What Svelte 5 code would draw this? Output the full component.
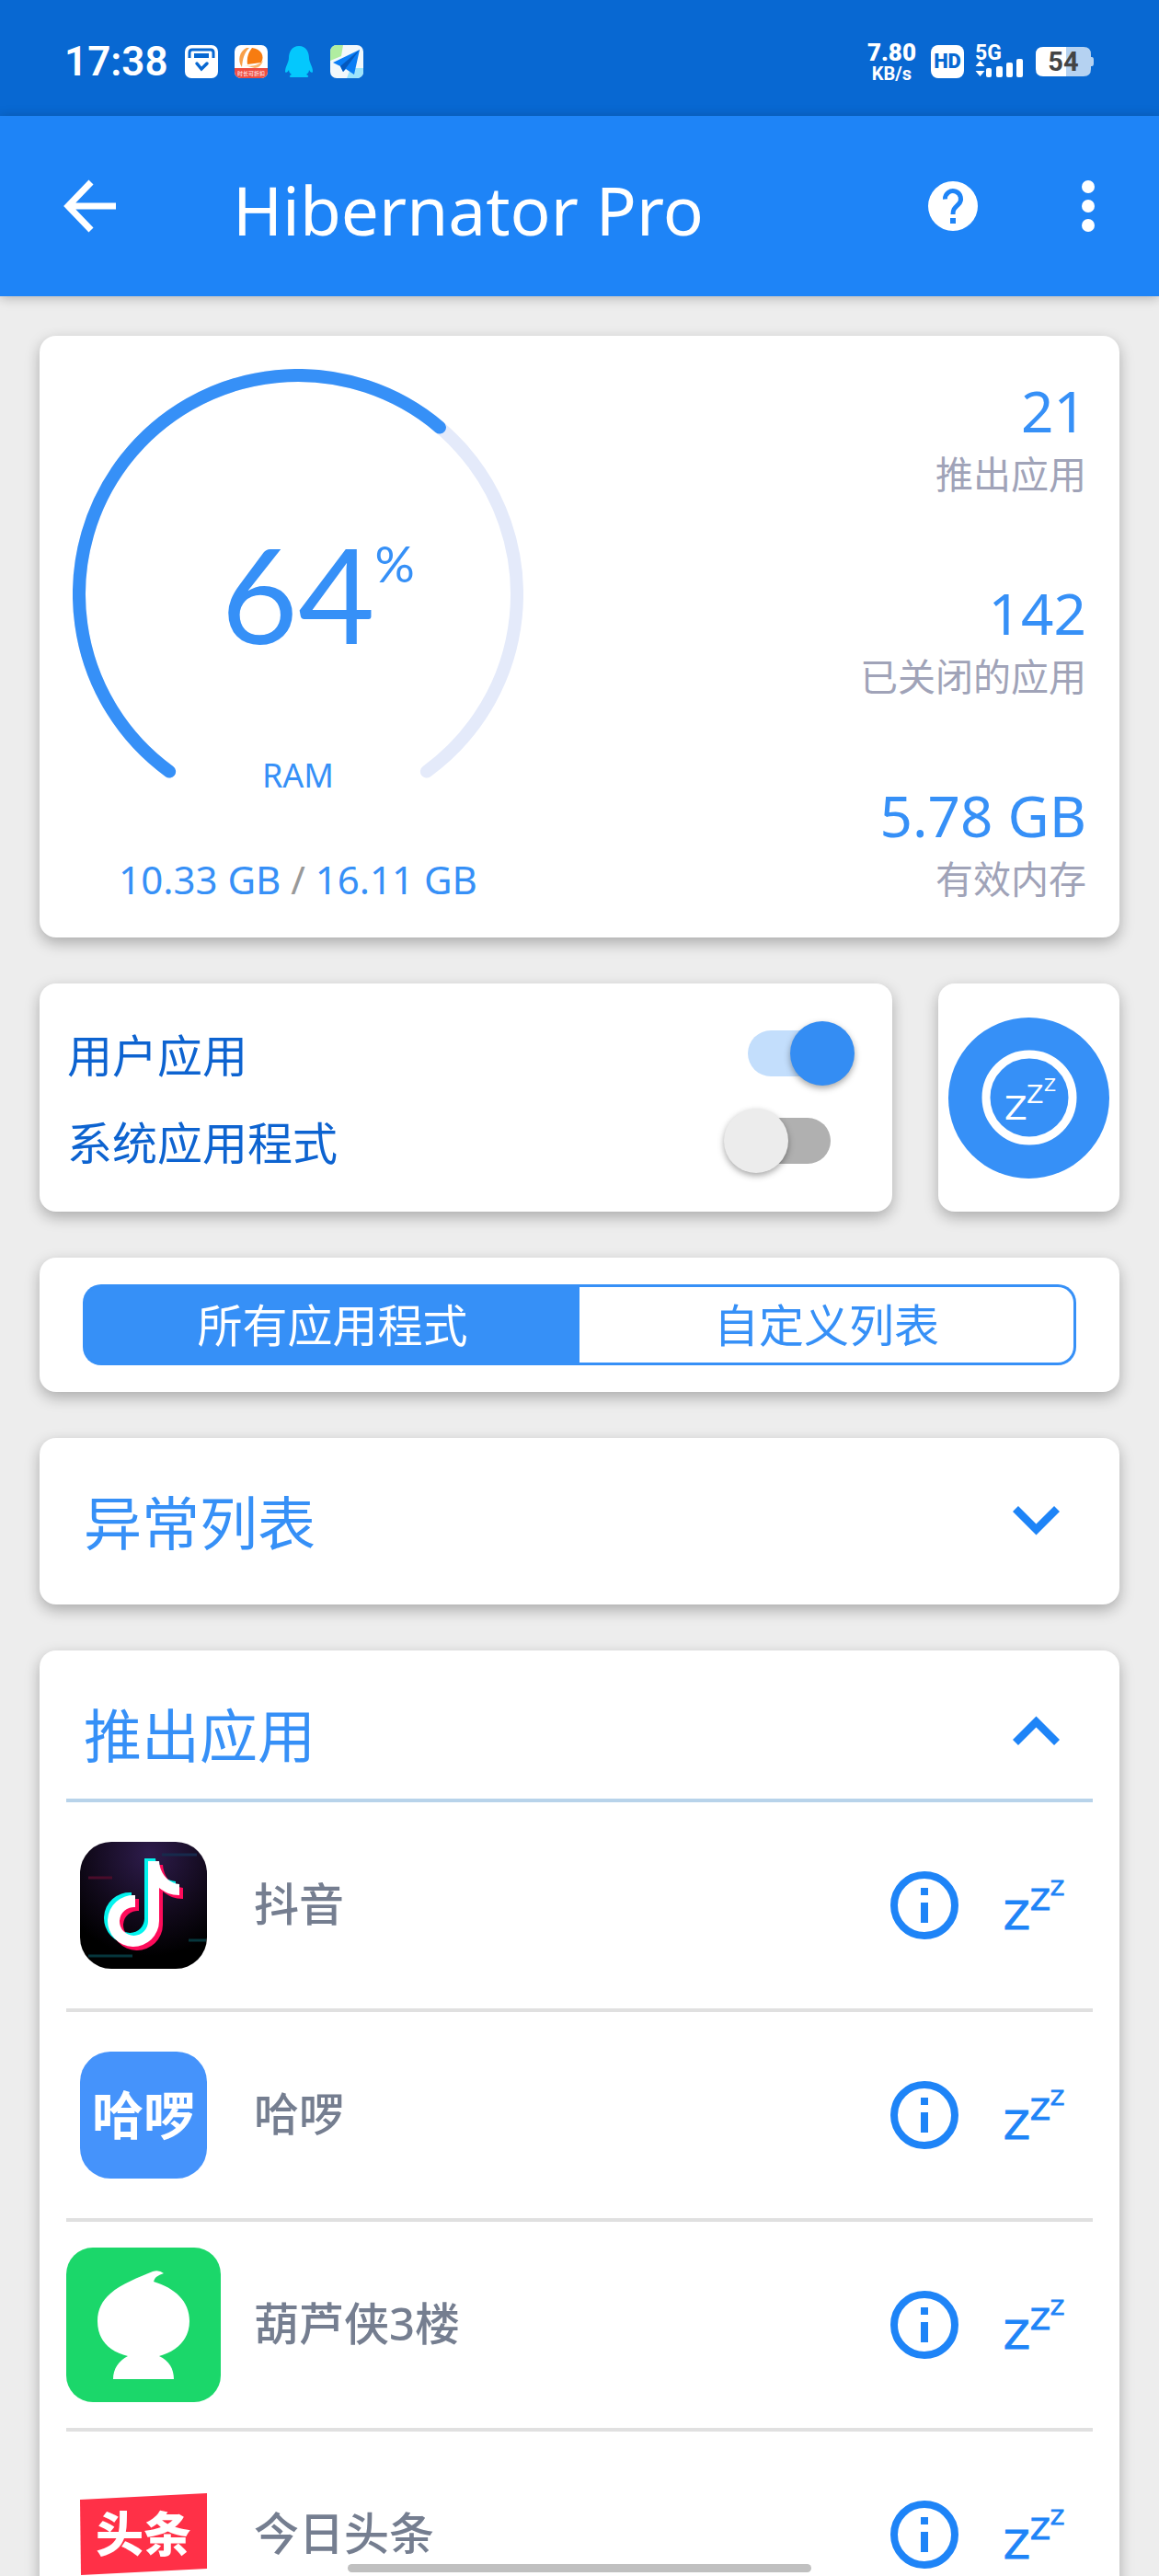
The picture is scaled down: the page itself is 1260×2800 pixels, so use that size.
<script lang="ts">
	type App = { name: string; icon: string };

	const stats = [
		{ value: '21', label: '推出应用' },
		{ value: '142', label: '已关闭的应用' },
		{ value: '5.78 GB', label: '有效内存' }
	];
	const apps: App[] = [
		{ name: '抖音', icon: 'douyin' },
		{ name: '哈啰', icon: 'hello' },
		{ name: '葫芦侠3楼', icon: 'gourd' },
		{ name: '今日头条', icon: 'toutiao' }
	];

	const RADIUS = 238;
	const START = 126;
	const SWEEP = 288;

	let percent = $state(64);
	let userApps = $state(true);
	let systemApps = $state(false);
	let tab = $state('all');
	let exceptionsOpen = $state(false);
	let closingOpen = $state(true);

	function point(deg: number) {
		const a = (deg * Math.PI) / 180;
		return `${245 + RADIUS * Math.cos(a)} ${245 + RADIUS * Math.sin(a)}`;
	}
	function arc(sweep: number) {
		return `M${point(START)} A${RADIUS} ${RADIUS} 0 ${sweep > 180 ? 1 : 0} 1 ${point(START + sweep)}`;
	}
</script>

{#snippet chevron(open: boolean)}
	<svg class="chevron" viewBox="6 6 12 12" aria-hidden="true">
		{#if open}
			<path d="M12 8l-6 6 1.41 1.41L12 10.83l4.59 4.58L18 14z" />
		{:else}
			<path d="M16.59 8.59L12 13.17 7.41 8.59 6 10l6 6 6-6z" />
		{/if}
	</svg>
{/snippet}

<div class="screen">
	<div class="status">
		<span class="clock">17:38</span>
		<svg width="36" height="36" viewBox="0 0 36 36">
			<rect width="36" height="36" rx="7" fill="#fff" />
			<path d="M5 14V8q0-3 3-3h20q3 0 3 3v6" fill="none" stroke="#0868d2" stroke-width="3" />
			<rect x="10" y="9" width="16" height="5" fill="#0868d2" />
			<path d="M13 20l5 6 6-6" fill="none" stroke="#0868d2" stroke-width="3.5" stroke-linecap="round" />
		</svg>
		<svg width="36" height="36" viewBox="0 0 36 36">
			<clipPath id="round"><rect width="36" height="36" rx="7" /></clipPath>
			<g clip-path="url(#round)">
				<rect width="36" height="36" fill="#fff" />
				<path d="M13 3C5 7 3 17 8 24C9 15 10 9 16 3z" fill="#f8a04a" />
				<path d="M19 3C29 4 33 12 29 19L14 21C13 14 15 8 19 3z" fill="#f77c10" />
				<path d="M11 22C20 24 27 21 31 17Q29 24 22 25z" fill="#fbb66c" />
				<rect y="25" width="36" height="11" fill="#ee4d42" />
				<text x="18" y="33" class="tiny">时长可折扣</text>
			</g>
		</svg>
		<svg width="32" height="36" viewBox="0 0 32 36">
			<path
				d="M16 1C8 1 5 8 5 14C5 19 1 23 1 29C2 31 4 29 5 27C5 30 7 31 8 32C5 33 5 35 8 35H24C27 35 27 33 24 32C25 31 27 30 27 27C28 29 30 31 31 29C31 23 27 19 27 14C27 8 24 1 16 1z"
				fill="#04c8fd"
			/>
		</svg>
		<svg width="36" height="36" viewBox="0 0 36 36">
			<g clip-path="url(#round)">
				<rect width="36" height="36" fill="#f2f8fb" />
				<path d="M0 0H14L12 12L0 17z" fill="#b0eda0" />
				<path d="M22 25H36V36H18z" fill="#9ee4fb" />
				<path d="M32 5L3 19L11 23L14 29L17 26L26 32z" fill="#0a7df5" />
				<path d="M32 5L11 23L14 29L17 25z" fill="#0558bd" />
			</g>
		</svg>
		<div class="network">
			<span class="speed"><b>7.80</b><span>KB/s</span></span>
			<span class="hd">HD</span>
			<svg width="54" height="56" viewBox="0 -9 54 56">
				<text x="0" y="17" class="net">5G</text>
				<path d="M5.500 18l5 6h-10zM0.500 29h10l-5 6z" fill="#fff" />
				<g fill="#fff">
					<rect x="12" y="26" width="6" height="10" rx="2" />
					<rect x="23" y="24" width="7" height="12" rx="2" />
					<rect x="34" y="20" width="7" height="16" rx="2" />
					<rect x="45" y="16" width="7" height="20" rx="2" />
				</g>
			</svg>
			<svg width="64" height="46" viewBox="0 -6 64 46">
				<path d="M33 1H52Q60 1 60 9V12H61Q63 12 63 15V19Q63 22 61 22H60V25Q60 33 52 33H33z" fill="#b5d2f1" />
				<path d="M8 1H33V33H8Q0 33 0 25V9Q0 1 8 1z" fill="#fff" />
				<text x="30" y="27" class="battery">54</text>
			</svg>
		</div>
	</div>

	<header class="bar">
		<button class="back" aria-label="返回">
			<svg width="58" height="58" viewBox="0 0 58 58">
				<path d="M57 29H5M30 3L5 29L30 55" fill="none" stroke="#fff" stroke-width="7" />
			</svg>
		</button>
		<h1>Hibernator Pro</h1>
		<button aria-label="帮助">
			<svg width="54" height="54" viewBox="0 0 54 54">
				<circle cx="27" cy="27" r="27" fill="#fff" />
				<path
					d="M18.500 19.500A8.500 8.500 0 1 1 33 25C29 29 27 30 27 36"
					fill="none"
					stroke="#1e84f7"
					stroke-width="5"
				/>
				<rect x="24" y="40" width="6" height="6" fill="#1e84f7" />
			</svg>
		</button>
		<button aria-label="更多">
			<svg width="16" height="58" viewBox="0 0 16 58" fill="#fff">
				<circle cx="8" cy="8" r="7" />
				<circle cx="8" cy="29" r="7" />
				<circle cx="8" cy="50" r="7" />
			</svg>
		</button>
	</header>

	<main>
		<section class="card summary">
			<div class="memory">
				<div class="gauge">
					<svg width="490" height="450" viewBox="0 0 490 450" fill="none" stroke-width="14" stroke-linecap="round">
						<path d={arc(SWEEP)} stroke="#e4eafa" />
						<path d={arc((SWEEP * percent) / 100)} stroke="#3690f7" />
					</svg>
					<p class="percent">{percent}<sup>%</sup></p>
					<p class="ram">RAM</p>
				</div>
				<p class="usage">10.33 GB <i>/</i> 16.11 GB</p>
			</div>
			<dl>
				{#each stats as s}
					<div>
						<dd>{s.value}</dd>
						<dt>{s.label}</dt>
					</div>
				{/each}
			</dl>
		</section>

		<div class="controls">
			<section class="card toggles">
				<label>用户应用 <input type="checkbox" role="switch" bind:checked={userApps} /></label>
				<label>系统应用程式 <input type="checkbox" role="switch" bind:checked={systemApps} /></label>
			</section>
			<section class="card sleep">
				<button aria-label="休眠">
					<svg width="104" height="104" viewBox="0 0 104 104">
						<circle cx="52" cy="52" r="47" fill="none" stroke="#fff" stroke-width="9" />
						<g class="zs" fill="#fff">
							<text x="25" y="76" font-size="36">Z</text>
							<text x="49" y="58" font-size="27">Z</text>
							<text x="68" y="45" font-size="19">Z</text>
						</g>
					</svg>
				</button>
			</section>
		</div>

		<section class="card tabs">
			<button class:active={tab === 'all'} onclick={() => (tab = 'all')}>所有应用程式</button>
			<button class:active={tab === 'custom'} onclick={() => (tab = 'custom')}>自定义列表</button>
		</section>

		<section class="card list">
			<button class="head" aria-expanded={exceptionsOpen} onclick={() => (exceptionsOpen = !exceptionsOpen)}>
				异常列表 {@render chevron(exceptionsOpen)}
			</button>
		</section>

		<section class="card list">
			<button class="head" aria-expanded={closingOpen} onclick={() => (closingOpen = !closingOpen)}>
				推出应用 {@render chevron(closingOpen)}
			</button>
			{#if closingOpen}
				<ul>
					{#each apps as app}
						<li>
							<svg class="icon" viewBox="0 0 168 168" aria-hidden="true">
								{#if app.icon === 'douyin'}
									<defs>
										<radialGradient id="night" cx="0.55" cy="0.1" r="0.8">
											<stop offset="0" stop-color="#2e1c4c" />
											<stop offset="0.6" stop-color="#120a1c" />
											<stop offset="1" stop-color="#000" />
										</radialGradient>
										<path
											id="note"
											d="M89 36H101C102 50 111 60 123 61V73C114 73 107 70 101 65V101A28 28 0 1 1 75 73V86A15.500 15.500 0 1 0 89 101z"
										/>
									</defs>
									<rect x="15" y="15" width="138" height="138" rx="34" fill="url(#night)" />
									<path d="M24 54H50" stroke="#4a0c2a" stroke-width="3" />
									<path d="M104 29H142" stroke="#172a4c" stroke-width="3" />
									<path d="M133 122H152M24 139H72" stroke="#06363c" stroke-width="3" />
									<use href="#note" x="-4" y="-3" fill="#04f4ee" />
									<use href="#note" x="4" y="4" fill="#fe0b5a" />
									<use href="#note" fill="#fff" />
								{:else if app.icon === 'hello'}
									<rect x="15" y="15" width="138" height="138" rx="33" fill="#4593fb" />
									<text x="84" y="105" class="mark" font-size="56">哈啰</text>
								{:else if app.icon === 'gourd'}
									<rect width="168" height="168" rx="29" fill="#1bd76a" />
									<path
										d="M106 28Q96 31 95 37C118 44 134 58 134 80C134 101 119 113 101 118C112 123 117 132 117 143H51C51 132 57 123 67 118C47 113 34 101 34 80C34 67 39 58 48 50C60 39 80 32 94 26Q101 24 106 28z"
										fill="#fff"
									/>
								{:else}
									<path d="M15 46L153 39V121L16 128z" fill="#ff3047" />
									<text x="84" y="103" class="mark heavy" font-size="52">头条</text>
								{/if}
							</svg>
							<span>{app.name}</span>
							<button aria-label="{app.name} 信息">
								<svg width="74" height="74" viewBox="0 0 74 74">
									<circle cx="37" cy="37" r="33" fill="none" stroke="#1e84f7" stroke-width="8" />
									<path d="M33 18H41V26H33zM33 34H41V56H33z" fill="#1e84f7" />
								</svg>
							</button>
							<button aria-label="{app.name} 休眠">
								<svg width="74" height="74" viewBox="0 0 74 74">
									<g class="zs bold" fill="#1e84f7" stroke="#1e84f7">
										<text x="1" y="63" font-size="42">Z</text>
										<text x="30" y="42" font-size="32">Z</text>
										<text x="52" y="26" font-size="22">Z</text>
									</g>
								</svg>
							</button>
						</li>
					{/each}
				</ul>
			{/if}
		</section>
	</main>
	<div class="pill"></div>
</div>

<style>
:global(body){
	background: #ededed;
}
.screen{
	display: flex;
	flex-direction: column;
	height: 100vh;
	overflow: hidden;
	color: #3690f7;
	font-family: "Noto Sans", "Noto Sans CJK SC", sans-serif;
}
.screen *{
	box-sizing: border-box;
}
svg{
	display: block;
	flex: none;
}
p, dl, dd, ul, h1{
	margin: 0;
	padding: 0;
}
button{
	padding: 0;
	border: 0;
	background: none;
	color: inherit;
	font: inherit;
	cursor: pointer;
}

.status{
	flex: none;
	display: flex;
	align-items: center;
	gap: 18px;
	height: 126px;
	padding: 8px 70px 0;
	background: #0868d2;
	color: #fff;
}
.clock{
	font: 600 44px/52px Roboto, sans-serif;
}
.tiny{
	fill: #fff;
	font: 6px "Noto Sans CJK SC", sans-serif;
	text-anchor: middle;
}
.network{
	display: flex;
	align-items: center;
	gap: 12px;
	margin-left: auto;
}
.speed{
	display: flex;
	flex-direction: column;
	align-items: center;
	margin-right: 4px;
	font: 700 20px/20px Roboto, sans-serif;
}
.speed b{
	font-size: 26px;
	line-height: 26px;
}
.hd{
	width: 36px;
	border-radius: 8px;
	background: #fff;
	color: #0868d2;
	font: 900 22px/36px Roboto, sans-serif;
	text-align: center;
}
.net{
	fill: #fff;
	font: 700 23px Roboto, sans-serif;
}
.battery{
	fill: #444;
	font: 700 29px Roboto, sans-serif;
	text-anchor: middle;
}

.bar{
	flex: none;
	z-index: 1;
	display: flex;
	align-items: center;
	gap: 112px;
	height: 196px;
	padding: 0 69px;
	background: #1e84f7;
	box-shadow: 0 2px 12px rgba(0, 0, 0, .25);
	color: #fff;
}
h1{
	flex: 1;
	padding: 6px 0 0 14px;
	font-size: 73px;
	font-weight: 400;
	white-space: nowrap;
}

main{
	flex: 1;
	display: flex;
	flex-direction: column;
	gap: 50px;
	min-height: 0;
	padding: 43px;
	overflow: hidden;
}
.card{
	flex: none;
	border-radius: 18px;
	background: #fff;
	box-shadow: 0 6px 16px rgba(0, 0, 0, .28);
}

.summary{
	display: flex;
	justify-content: space-between;
	height: 654px;
	padding: 36px 36px 0;
}
.gauge{
	display: grid;
	justify-items: center;
}
.gauge > *{
	grid-area: 1 / 1;
}
.percent{
	display: flex;
	align-self: start;
	padding-top: 156px;
	font: 144px/176px Lato, sans-serif;
}
.percent sup{
	width: 0;
	font-size: 54px;
	line-height: 112px;
}
.ram{
	align-self: end;
	font-size: 36px;
	line-height: 16px;
}
.usage{
	padding-top: 75px;
	font-size: 42px;
	line-height: 60px;
	text-align: center;
}
.usage i{
	color: #999;
	font-style: normal;
}
dl{
	text-align: right;
}
dl div{
	display: flex;
	flex-direction: column;
	height: 220px;
	padding-top: 8px;
}
dd{
	font-size: 62px;
	line-height: 74px;
}
dt{
	color: #a0a3b8;
	font-size: 41px;
	line-height: 64px;
}

.controls{
	display: flex;
	gap: 50px;
}
.toggles{
	flex: 1;
	padding: 28px 41px 30px 30px;
	color: #0d63d0;
}
.toggles label{
	display: flex;
	align-items: center;
	justify-content: space-between;
	height: 95px;
	font-size: 49px;
}
input{
	appearance: none;
	position: relative;
	width: 142px;
	height: 70px;
	margin: 0;
	cursor: pointer;
}
input::before{
	content: '';
	position: absolute;
	inset: 10px 26px;
	border-radius: 25px;
	background: #b0b0b0;
}
input::after{
	content: '';
	position: absolute;
	left: 0;
	width: 70px;
	height: 70px;
	border-radius: 50%;
	background: #ececec;
	box-shadow: 0 3px 7px rgba(0, 0, 0, .35);
}
input:checked::before{
	background: #c3defc;
}
input:checked::after{
	left: 72px;
	background: #348df3;
}
.sleep{
	display: flex;
	align-items: center;
	padding: 0 11px;
}
.sleep button{
	display: grid;
	place-items: center;
	width: 175px;
	height: 175px;
	border-radius: 50%;
	background: #3690f7;
}
.zs{
	font-family: "DejaVu Sans", sans-serif;
}
.zs.bold{
	stroke-width: 1px;
}

.tabs{
	display: flex;
	padding: 29px 47px;
}
.tabs button{
	flex: 1;
	height: 88px;
	border: 3px solid #3690f7;
	border-left: 0;
	border-radius: 0 20px 20px 0;
	font-size: 49px;
	line-height: 80px;
}
.tabs button:first-child{
	border-right: 0;
	border-left: 3px solid #3690f7;
	border-radius: 20px 0 0 20px;
}
.tabs button.active{
	background: #3690f7;
	color: #fff;
}

.list{
	padding: 0 29px;
}
.head{
	display: flex;
	align-items: center;
	justify-content: space-between;
	width: 100%;
	height: 181px;
	padding: 0 36px 4px 19px;
	font-size: 63px;
}
.head[aria-expanded="true"]{
	height: 161px;
	padding-top: 20px;
}
.chevron{
	width: 51px;
	fill: #1e84f7;
}
ul{
	border-top: 4px solid #b8d3ea;
	list-style: none;
}
li{
	display: flex;
	align-items: center;
	height: 228px;
	border-bottom: 4px solid #e0e0e0;
	color: #757e90;
	font-size: 49px;
	font-weight: 500;
	line-height: 60px;
}
li span{
	flex: 1;
	padding: 0 0 4px 36px;
}
.icon{
	width: 168px;
}
.mark{
	fill: #fff;
	font-family: "Noto Sans CJK SC", sans-serif;
	font-weight: 700;
	text-anchor: middle;
}
.mark.heavy{
	font-weight: 900;
}
li button{
	display: grid;
	place-items: center;
	width: 122px;
	height: 122px;
}
.pill{
	position: fixed;
	bottom: 4px;
	left: 30%;
	width: 40%;
	height: 9px;
	border-radius: 5px;
	background: #c0c0c0;
}
</style>
